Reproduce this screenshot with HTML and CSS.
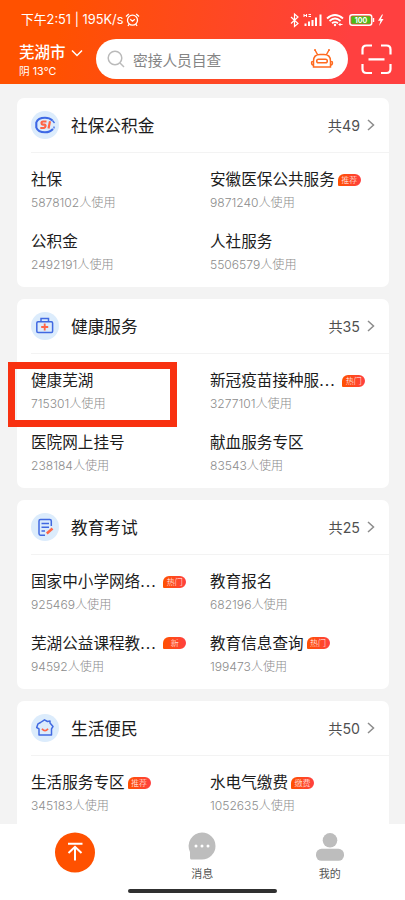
FILE: index.html
```html
<!DOCTYPE html>
<html lang="zh-CN">
<head>
<meta charset="utf-8">
<meta name="viewport" content="width=device-width, initial-scale=1">
<title>芜湖市服务</title>
<link rel="stylesheet" href="styles.css">
</head>
<body>
<div class="phone">
  <header class="top">
    <div class="status">
      <span class="clock">下午2:51 | 195K/s</span>
      <svg class="alarm" width="15" height="14" viewBox="0 0 15 14" fill="none" stroke="#fff" stroke-width="1.3"><circle cx="7.5" cy="7.2" r="5"/><path d="M1 3.5 3.8 1M14 3.5 11.2 1M5.2 6.3 7.5 8.2 9.8 6.3M4 11.4 3 13M11 11.4 12 13"/></svg>
      <svg class="signals" width="98" height="16" viewBox="0 0 98 16" fill="none" stroke="#fff">
        <path d="M4 5 11 11.5 7.5 14.5V2L11 5 4 11.5" stroke-width="1.2"/>
        <path d="M17 2v3M17 3.500h2.500M19.500 2v3M21.500 2.500h2.500M21.500 4.500h2.500" stroke-width="1"/>
        <path d="M18.500 11.500V14M22 9.500V14M25.500 8V14M29 5.500V14M33.500 2.500V14" stroke-width="2"/>
        <path d="M40 6.500Q48 -.5 56 6.500M42.500 9Q48 4 53.500 9M45 11.300Q48 9 51 11.300" stroke-width="1.800"/>
        <circle cx="48" cy="13" r="1.200" fill="#fff" stroke="none"/>
        <path d="M51.500 12.500h4M53 14V11" stroke-width="1"/>
        <rect x="62.800" y="2.800" width="22" height="10.500" rx="2.500" stroke-width="1.400"/>
        <rect x="64.300" y="4.300" width="19" height="7.500" rx="1" fill="#4dbb16" stroke="none"/>
        <path d="M86.500 6v4" stroke-width="1.400"/>
        <text class="charge" x="74" y="11" text-anchor="middle">100</text>
        <path d="M95 2.500 91 8.800H93.500L92 14 96.500 7H94L96 2.500Z" fill="#fff" stroke="none"/>
      </svg>
    </div>
    <div class="tools">
      <div class="place">
        <div class="city">芜湖市<svg width="12" height="8" viewBox="0 0 12 8" fill="none" stroke="#fff" stroke-width="1.500"><path d="M1 1.500 6 6.500 11 1.500"/></svg></div>
        <div class="weather">阴 13℃</div>
      </div>
      <div class="search">
        <svg width="18" height="18" viewBox="0 0 18 18" fill="none" stroke="#bababa" stroke-width="1.500"><circle cx="8" cy="8" r="6.800"/><path d="m13 13 4 4"/></svg>
        <span>密接人员自查</span>
        <svg class="robot" width="24" height="20" viewBox="0 0 24 20" fill="none" stroke="#ff6a1f" stroke-width="1.500"><path d="M5 1 7.500 5.500M4 1H6M19 1 16.500 5.500M18 1H20M3.500 18V12Q3.500 5.500 10 5.500H14Q20.500 5.500 20.500 12V18ZM3.500 11.500Q1.500 12 1.500 14T3.500 16.500M20.500 11.500Q22.500 12 22.500 14T20.500 16.500"/><rect x="6.700" y="10.200" width="10.600" height="3.600" rx="1.800"/></svg>
      </div>
      <svg class="scan" width="31" height="31" viewBox="0 0 31 31" fill="none" stroke="#fff" stroke-width="2.200"><path d="M1.500 10.500V5.500Q1.500 1.500 5.500 1.500H11M20 1.500H25.500Q29.500 1.500 29.500 5.500V10.500M29.500 20V25Q29.500 29 25.500 29H20M11 29H5.500Q1.500 29 1.500 25V20M7.500 15.300H23.500"/></svg>
    </div>
  </header>

  <main class="list">
    <section class="card">
      <div class="head">
        <svg class="icon" width="28" height="28" viewBox="0 0 28 28" fill="none"><circle cx="14" cy="14" r="14" fill="#dcecfc"/><path d="M21.500 9.500Q18.500 6.800 14 6.800 7 6.800 5.300 11.500V16.500Q7 21.300 14 21.300 19 21.300 22 18" stroke="#3d68e5" stroke-width="2.100"/><path d="M21.500 9.500 23.500 12M23 15.500V17.500" stroke="#3d68e5" stroke-width="1.300"/><path d="M15.500 10.500H12Q10.500 10.500 10.500 12T12 13.700H13.500Q14.700 13.700 14.500 15.200T13 17H9.300M19 10.200 17.500 17.500" stroke="#ff6547" stroke-width="2.200"/></svg>
        <h2>社保公积金</h2><span class="total">共49</span>
        <svg class="arrow" width="8" height="12" viewBox="0 0 8 12"><path d="m1 1 5.500 5L1 11"/></svg>
      </div>
      <div class="items">
        <div class="item"><h3>社保</h3><p>5878102人使用</p></div>
        <div class="item"><h3>安徽医保公共服务<b class="tag">推荐</b></h3><p>9871240人使用</p></div>
        <div class="item"><h3>公积金</h3><p>2492191人使用</p></div>
        <div class="item"><h3>人社服务</h3><p>5506579人使用</p></div>
      </div>
    </section>

    <section class="card">
      <div class="head">
        <svg class="icon" width="28" height="28" viewBox="0 0 28 28" fill="none"><circle cx="14" cy="14" r="14" fill="#dcecfc"/><rect x="5.800" y="9.700" width="15.800" height="10.800" rx="1.200" stroke="#4169e1" stroke-width="1.500"/><path d="M10 9.500V6.500H17.500V9.500" stroke="#4169e1" stroke-width="1.500"/><path d="M13.700 11.500V18.500M10.200 15H17.200" stroke="#ff6547" stroke-width="1.800"/></svg>
        <h2>健康服务</h2><span class="total">共35</span>
        <svg class="arrow" width="8" height="12" viewBox="0 0 8 12"><path d="m1 1 5.500 5L1 11"/></svg>
      </div>
      <div class="items">
        <div class="item"><h3>健康芜湖</h3><p>715301人使用</p></div>
        <div class="item"><h3>新冠疫苗接种服<i>...</i><b class="tag">热门</b></h3><p>3277101人使用</p></div>
        <div class="item"><h3>医院网上挂号</h3><p>238184人使用</p></div>
        <div class="item"><h3>献血服务专区</h3><p>83543人使用</p></div>
      </div>
      <div class="marker"></div>
    </section>

    <section class="card">
      <div class="head">
        <svg class="icon" width="28" height="28" viewBox="0 0 28 28" fill="none"><circle cx="14" cy="14" r="14" fill="#dcecfc"/><path d="M20.300 13V8Q20.300 6.500 18.800 6.500H9.500Q8 6.500 8 8V20.500Q8 22.200 9.500 22.200H14M10.500 10.500H18M10.500 14.200H18M10.500 18H14" stroke="#4169e1" stroke-width="1.500"/><path d="m15.800 20.500 5.700-5" stroke="#ff6547" stroke-width="2.400"/></svg>
        <h2>教育考试</h2><span class="total">共25</span>
        <svg class="arrow" width="8" height="12" viewBox="0 0 8 12"><path d="m1 1 5.500 5L1 11"/></svg>
      </div>
      <div class="items">
        <div class="item"><h3>国家中小学网络<i>...</i><b class="tag">热门</b></h3><p>925469人使用</p></div>
        <div class="item"><h3>教育报名</h3><p>682196人使用</p></div>
        <div class="item"><h3>芜湖公益课程教<i>...</i><b class="tag">新</b></h3><p>94592人使用</p></div>
        <div class="item"><h3>教育信息查询<b class="tag">热门</b></h3><p>199473人使用</p></div>
      </div>
    </section>

    <section class="card">
      <div class="head">
        <svg class="icon" width="28" height="28" viewBox="0 0 28 28" fill="none"><circle cx="14" cy="14" r="14" fill="#dcecfc"/><path d="M8 21V14.800L5.700 13.500 7 9.800 9.500 8.500 13.500 5.800 16.500 7.500 19 7V9L22 12.500 20.500 14.800V21Z" stroke="#4169e1" stroke-width="1.500" stroke-linejoin="round"/><path d="M11 14.700Q14 18.500 17 14.700" stroke="#ff6547" stroke-width="1.800"/></svg>
        <h2>生活便民</h2><span class="total">共50</span>
        <svg class="arrow" width="8" height="12" viewBox="0 0 8 12"><path d="m1 1 5.500 5L1 11"/></svg>
      </div>
      <div class="items">
        <div class="item"><h3>生活服务专区<b class="tag">推荐</b></h3><p>345183人使用</p></div>
        <div class="item"><h3>水电气缴费<b class="tag">缴费</b></h3><p>1052635人使用</p></div>
      </div>
    </section>
  </main>

  <nav class="tabs">
    <div class="tab">
      <svg width="40" height="41" viewBox="0 0 40 41" fill="none"><circle cx="20" cy="20.500" r="20" fill="#ff5100"/><path d="M13 11.800H27.500M20 28.500V15.500M13.500 21 20 14.800 26.500 21" stroke="#fff" stroke-width="2"/></svg>
    </div>
    <div class="tab">
      <svg width="28" height="28" viewBox="0 0 28 28"><path d="M14 .5A13.500 13.500 0 1 1 14 27.500H3Q2 27.500 2 25V20A13.500 13.500 0 0 1 14 .5Z" fill="#bdbdbd"/><g fill="#fff"><circle cx="8" cy="14" r="1.500"/><circle cx="14" cy="14" r="1.500"/><circle cx="20" cy="14" r="1.500"/></g></svg>
      <span>消息</span>
    </div>
    <div class="tab">
      <svg width="28" height="29" viewBox="0 0 28 29" fill="#bdbdbd"><circle cx="14" cy="8.300" r="7.300"/><rect y="16.800" width="28" height="12" rx="5.500"/></svg>
      <span>我的</span>
    </div>
    <div class="grip"></div>
  </nav>
</div>
</body>
</html>
```
FILE: styles.css
```css
* { box-sizing: border-box; }
body {
  margin: 0;
  background: #f3f3f3;
  color: #1c1c1c;
  font-family: Inter, "Noto Sans CJK SC", sans-serif;
}
h2, h3, p { margin: 0; font-weight: 400; }
svg { display: block; flex: none; }

.phone {
  width: 405px;
  height: 900px;
  display: flex;
  flex-direction: column;
  overflow: hidden;
}

.top {
  flex: none;
  height: 84px;
  padding-top: 10px;
  color: #fff;
  background: linear-gradient(100deg, #ff5100 15%, #ff4040 85%);
}
.status {
  display: flex;
  align-items: center;
  height: 20px;
  padding: 0 20px 0 21px;
}
.clock { font-size: 12.8px; line-height: 20px; white-space: nowrap; }
.alarm { margin-left: 2px; }
.signals { margin-left: auto; }
.charge { font-size: 7px; font-weight: 700; fill: #fff; stroke: none; }

.tools { display: flex; padding: 9px 13px 0 19px; }
.place { width: 77px; padding-top: 4px; }
.city {
  display: flex;
  align-items: center;
  gap: 5px;
  font-size: 15.5px;
  font-weight: 500;
  line-height: 20px;
}
.weather { font-size: 10.7px; line-height: 18px; }
.search {
  display: flex;
  align-items: center;
  width: 252px;
  height: 40px;
  padding: 0 14px 0 11px;
  border-radius: 20px;
  background: #fff;
  color: #858585;
  font-size: 14.7px;
}
.search span { margin-left: 8px; }
.robot { margin-left: auto; }
.scan { margin: 5px 0 0 13px; }

.list {
  flex: 1;
  min-height: 0;
  display: flex;
  flex-direction: column;
  gap: 12px;
  padding: 14px 16px 0 17px;
  overflow: hidden;
}
.card {
  position: relative;
  flex: none;
  height: 189px;
  border-radius: 7px;
  background: #fff;
}
.head {
  display: flex;
  align-items: center;
  height: 55px;
  margin-left: 14px;
  padding-right: 14px;
  border-bottom: 1px solid #f3f3f3;
}
.head h2 { margin-left: 12px; padding-top: 2px; font-size: 16.7px; line-height: 24px; }
.total { margin-left: auto; color: #505050; font-size: 14.2px; }
.arrow { margin-left: 7px; fill: none; stroke: #8c8c8c; stroke-width: 1.5; }

.items {
  display: grid;
  grid-template-columns: 179px 1fr;
  grid-auto-rows: 61.5px;
  padding: 16px 0 0 14px;
}
.item h3 {
  display: flex;
  align-items: center;
  font-size: 15.6px;
  line-height: 22px;
  white-space: nowrap;
}
.item i { width: 22px; font-style: normal; letter-spacing: 1px; }
.item p { margin-top: 3px; color: #8c8c8c; font-size: 12.1px; font-weight: 300; line-height: 18px; }
.tag {
  min-width: 23px;
  height: 12px;
  margin: -1px 0 0 3px;
  border-radius: 6px 6px 6px 1px;
  background: linear-gradient(90deg, #ff5100, #ff4040);
  color: #fff;
  font-size: 8px;
  font-weight: 300;
  line-height: 12px;
  text-align: center;
}
i + .tag { margin-left: 1px; }

.marker {
  position: absolute;
  left: -9px;
  top: 63px;
  width: 169px;
  height: 65px;
  border: 7px solid #f83110;
}

.tabs {
  position: relative;
  flex: none;
  display: grid;
  grid-template-columns: repeat(3, 127.5px);
  height: 76px;
  padding: 8px 11px 0;
  background: #fff;
}
.tab { display: flex; flex-direction: column; align-items: center; }
.tab svg { margin-top: 0; }
.tab span { margin-top: 6px; color: #555; font-size: 11px; line-height: 16px; }
.tab svg[height="29"] + span { margin-top: 5px; }
.grip {
  position: absolute;
  left: 128px;
  bottom: 7px;
  width: 149px;
  height: 4px;
  border-radius: 2px;
  background: #303030;
}
```
